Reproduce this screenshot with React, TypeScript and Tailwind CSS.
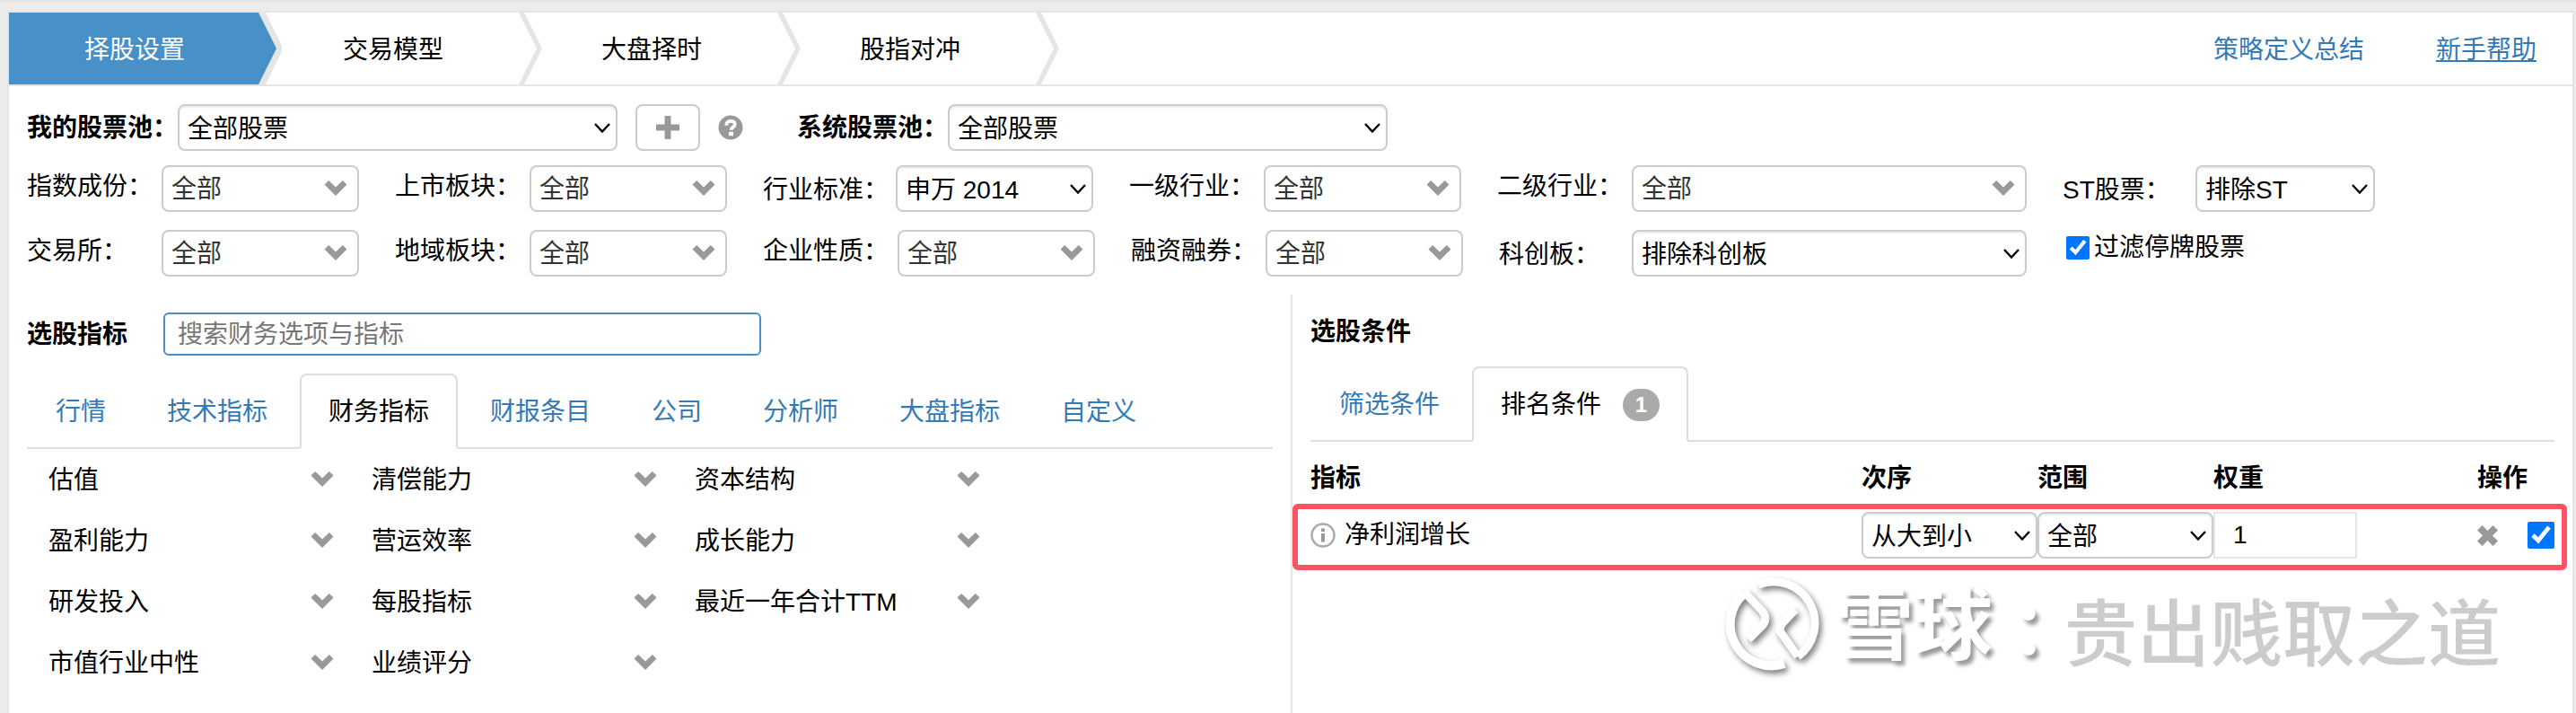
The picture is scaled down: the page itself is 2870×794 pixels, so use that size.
import React, { useState } from 'react';
import { clsx } from 'clsx';

type FieldProps = {
  id: string;
  label: string;
  value: string;
  kind: 'picker' | 'select';
  boxClass?: string;
};

const steps = ['择股设置', '交易模型', '大盘择时', '股指对冲'];

const filterRows: FieldProps[][] = [
  [
    { id: 'index', label: '指数成份：', value: '全部', kind: 'picker' },
    { id: 'board', label: '上市板块：', value: '全部', kind: 'picker' },
    { id: 'standard', label: '行业标准：', value: '申万 2014', kind: 'select' },
    { id: 'level1', label: '一级行业：', value: '全部', kind: 'picker' },
    { id: 'level2', label: '二级行业：', value: '全部', kind: 'picker', boxClass: 'w-[440px]' },
    { id: 'st', label: 'ST股票：', value: '排除ST', kind: 'select', boxClass: 'w-[200px]' },
  ],
  [
    { id: 'exchange', label: '交易所：', value: '全部', kind: 'picker' },
    { id: 'region', label: '地域板块：', value: '全部', kind: 'picker' },
    { id: 'nature', label: '企业性质：', value: '全部', kind: 'picker' },
    { id: 'margin', label: '融资融券：', value: '全部', kind: 'picker' },
    { id: 'star', label: '科创板：', value: '排除科创板', kind: 'select', boxClass: 'w-[440px]' },
  ],
];

const indicatorTabs = ['行情', '技术指标', '财务指标', '财报条目', '公司', '分析师', '大盘指标', '自定义'];

const indicatorGroups = [
  '估值', '清偿能力', '资本结构',
  '盈利能力', '营运效率', '成长能力',
  '研发投入', '每股指标', '最近一年合计TTM',
  '市值行业中性', '业绩评分',
];

function ThickChevron() {
  return (
    <svg className="mb-1 h-[17px] w-[26px] shrink-0 fill-[#999]" viewBox="0 0 26 17" aria-hidden="true">
      <path d="M.5 4.500 5.200 0 13 7.500 20.800 0l4.700 4.500L13 17z" />
    </svg>
  );
}

function Select({ id, value, label, className }: { id: string; value: string; label?: string; className?: string }) {
  return (
    <div className={clsx('relative', className)}>
      <select
        id={id}
        aria-label={label}
        className="block h-[52px] w-full appearance-none rounded-lg border-2 border-[#ccc] bg-white pl-[9px] pr-8 pt-1 text-black shadow-[inset_0_2px_2px_rgba(0,0,0,0.08)]"
      >
        <option>{value}</option>
      </select>
      <svg
        className="pointer-events-none absolute right-2 top-[21px] h-[11px] w-[18px]"
        viewBox="0 0 18 11"
        fill="none"
        stroke="#000"
        strokeWidth="2.4"
        aria-hidden="true"
      >
        <path d="m1 1 8 8.5L17 1" />
      </svg>
    </div>
  );
}

function Field({ id, label, value, kind, boxClass = 'w-[220px]' }: FieldProps) {
  if (kind === 'select') {
    return (
      <div className="flex">
        <label htmlFor={id} className="w-[148px] pt-2">{label}</label>
        <Select id={id} value={value} className={boxClass} />
      </div>
    );
  }
  return (
    <div className="flex">
      <label htmlFor={id} className="w-[150px] pt-1">{label}</label>
      <button
        id={id}
        type="button"
        className={clsx('flex h-[52px] items-center justify-between rounded-lg border-2 border-[#ccc] pl-[9px] pr-[11px] pt-0.5 text-[#333]', boxClass)}
      >
        {value}
        <ThickChevron />
      </button>
    </div>
  );
}

function Tab({ active, onClick, children }: { active: boolean; onClick: () => void; children: React.ReactNode }) {
  return (
    <button
      type="button"
      role="tab"
      aria-selected={active}
      onClick={onClick}
      className={clsx(
        '-mb-0.5 flex h-[84px] items-center rounded-t-lg border-2 px-[30px] pt-0.5',
        active ? 'border-[#ddd] border-b-white bg-white text-black' : 'border-transparent text-[#337ab7]'
      )}
    >
      {children}
    </button>
  );
}

function StepBar() {
  const [current, setCurrent] = useState(0);

  return (
    <header className="flex h-[82px] items-stretch justify-between border-b-2 border-[#e5e5e5]">
      <nav className="flex">
        {steps.map((step, index) => (
          <button
            key={step}
            type="button"
            onClick={() => setCurrent(index)}
            className={clsx('relative w-[288px] pr-2 pt-1', index === current ? 'text-white' : 'text-black')}
          >
            <svg className="absolute left-0 top-0 h-20 w-[306px]" viewBox="0 0 306 80" aria-hidden="true">
              {index === current ? (
                <>
                  <path d="M278 0h8l18 37v6l-18 37h-8z" fill="#e5e5e5" />
                  <path d="M0 0h278l20 40-20 40H0z" fill="#4890c8" />
                </>
              ) : (
                <path d="M280 0h6l20 40-20 40h-6l20-40z" fill="#e5e5e5" />
              )}
            </svg>
            <span className="relative">{step}</span>
          </button>
        ))}
      </nav>
      <div className="flex items-center gap-20 pr-10 pt-1 text-[#337ab7]">
        <a href="#summary">策略定义总结</a>
        <a href="#help" className="underline">新手帮助</a>
      </div>
    </header>
  );
}

function StockPools() {
  return (
    <div className="flex items-center">
      <label htmlFor="my-pool" className="w-[168px] pt-0.5 font-bold">我的股票池：</label>
      <Select id="my-pool" value="全部股票" className="w-[490px]" />
      <button type="button" aria-label="新建股票池" className="ml-5 flex h-[52px] w-[72px] items-center justify-center rounded-lg border-2 border-[#ccc]">
        <svg className="h-[26px] w-[26px] fill-[#999]" viewBox="0 0 26 26" aria-hidden="true">
          <path d="M10.500 0h5a1 1 0 0 1 1 1v8.500H25a1 1 0 0 1 1 1v5a1 1 0 0 1-1 1h-8.500V25a1 1 0 0 1-1 1h-5a1 1 0 0 1-1-1v-8.500H1a1 1 0 0 1-1-1v-5a1 1 0 0 1 1-1h8.500V1a1 1 0 0 1 1-1z" />
        </svg>
      </button>
      <svg className="ml-5 h-7 w-7" viewBox="0 0 28 28" aria-hidden="true">
        <circle cx="14" cy="14" r="13.5" fill="#999" />
        <path d="M9.300 11.800c0-3.400 2-5 4.900-5 2.800 0 4.600 1.500 4.600 3.800 0 3.200-4.300 2.800-4.300 6.200" fill="none" stroke="#fff" strokeWidth="3.800" />
        <rect x="12" y="18.800" width="5" height="4.400" fill="#fff" />
      </svg>
      <label htmlFor="system-pool" className="ml-[60px] w-[168px] pt-0.5 font-bold">系统股票池：</label>
      <Select id="system-pool" value="全部股票" className="w-[490px]" />
    </div>
  );
}

function IndicatorPanel() {
  const [tab, setTab] = useState('财务指标');

  return (
    <section className="w-1/2 pl-5 pr-5">
      <div className="flex items-center pt-5">
        <label htmlFor="search" className="w-[152px] pt-0.5 font-bold">选股指标</label>
        <input
          id="search"
          type="text"
          placeholder="搜索财务选项与指标"
          className="h-12 w-[666px] rounded-md border-2 border-[#4890c8] px-[14px] pt-0.5 placeholder:text-[#777]"
        />
      </div>
      <div role="tablist" className="mt-5 flex gap-1 border-b-2 border-[#ddd]">
        {indicatorTabs.map(name => (
          <Tab key={name} active={name === tab} onClick={() => setTab(name)}>{name}</Tab>
        ))}
      </div>
      <ul className="grid w-[1080px] grid-cols-3">
        {indicatorGroups.map(name => (
          <li key={name}>
            <button type="button" className="flex h-[68px] w-full items-center justify-between pl-6 pr-[18px] pt-0.5">
              {name}
              <ThickChevron />
            </button>
          </li>
        ))}
      </ul>
    </section>
  );
}

function ConditionTable() {
  return (
    <table className="w-full table-fixed text-left">
      <thead>
        <tr className="h-[69px]">
          <th className="pl-5 pt-3">指标</th>
          <th className="w-[196px] pt-3">次序</th>
          <th className="w-[196px] pt-3">范围</th>
          <th className="w-[294px] pt-3">权重</th>
          <th className="w-[100px] pt-3">操作</th>
        </tr>
      </thead>
      <tbody>
        <tr className="relative h-[74px]">
          <td className="pb-1 pl-5">
            <span className="pointer-events-none absolute inset-0 rounded-md border-[6px] border-[#ff5263]" />
            <div className="flex items-center gap-[10px]">
              <svg className="h-7 w-7" viewBox="0 0 28 28" aria-hidden="true">
                <circle cx="14" cy="14" r="12.500" fill="none" stroke="#aaa" strokeWidth="2.500" />
                <path d="M12 6.500h4v3.600h-4zM12 12h4v9.500h-4z" fill="#999" />
              </svg>
              净利润增长
            </div>
          </td>
          <td className="pb-1"><Select id="order" label="次序" value="从大到小" /></td>
          <td className="pb-1"><Select id="range" label="范围" value="全部" /></td>
          <td className="pb-1">
            <input type="text" aria-label="权重" defaultValue="1" className="block h-[52px] w-40 border-2 border-[#e5e5e5] px-5" />
          </td>
          <td className="pb-1">
            <div className="flex items-center justify-between pr-[14px]">
              <button type="button" aria-label="删除">
                <svg className="h-[23px] w-[23px] fill-[#999]" viewBox="0 0 23 23" aria-hidden="true">
                  <path d="M0 5.500 5.500 0l6 6 6-6L23 5.500l-6 6 6 6-5.500 5.500-6-6-6 6L0 17.500l6-6z" />
                </svg>
              </button>
              <input type="checkbox" aria-label="启用" defaultChecked className="h-[30px] w-[30px] accent-[#0075ff]" />
            </div>
          </td>
        </tr>
      </tbody>
    </table>
  );
}

function Watermark() {
  return (
    <div className="flex items-center whitespace-nowrap pl-[480px] leading-[104px]">
      <svg className="h-[108px] w-[108px] shrink-0 drop-shadow-[3px_4px_3px_rgba(0,0,0,0.5)]" viewBox="0 0 108 108" fill="none" stroke="#fff" strokeWidth="9" aria-hidden="true">
        <path d="M39 8a46 46 0 0 1 44 80" />
        <path d="M23 18a46 46 0 0 0 45 78" strokeWidth="10" />
        <path d="m23 16 20 21q7 8 1 16L28 69M80 36 66 51q-6 7 0 13l17 24" />
      </svg>
      <span className="ml-4 text-[88px] font-bold text-white [text-shadow:4px_5px_4px_rgba(0,0,0,0.4)]">雪球</span>
      {/* the TC face centres the colon in its square */}
      <span className="font-['Noto_Sans_CJK_TC',sans-serif] text-[80px] font-bold text-white [text-shadow:4px_5px_4px_rgba(0,0,0,0.4)]">：</span>
      <span className="pt-5 text-[81px] font-medium text-[#ccc]">贵出贱取之道</span>
    </div>
  );
}

function ConditionPanel() {
  const [tab, setTab] = useState('排名条件');

  return (
    <section className="w-1/2 border-l-2 border-[#e5e5e5]">
      <div className="pl-5 pr-5">
        <h2 className="pb-[18px] pt-[22px] font-bold">选股条件</h2>
        <div role="tablist" className="flex gap-1 border-b-2 border-[#ddd]">
          <Tab active={tab === '筛选条件'} onClick={() => setTab('筛选条件')}>筛选条件</Tab>
          <Tab active={tab === '排名条件'} onClick={() => setTab('排名条件')}>
            排名条件
            <span className="ml-6 flex h-9 w-[41px] items-center justify-center rounded-full bg-[#aaa] text-2xl font-bold text-white">1</span>
          </Tab>
        </div>
      </div>
      <div className="pr-[6px]">
        <ConditionTable />
      </div>
      <Watermark />
    </section>
  );
}

export default function App() {
  return (
    <div className="min-h-screen border-t-2 border-[#e5e5e5] bg-[#ececec] pl-2 pr-[2px] pt-[10px] font-['Liberation_Sans','Noto_Sans_CJK_SC',sans-serif] text-[28px] leading-10 text-black">
      <main className="flex min-h-[calc(100vh-12px)] flex-col border-2 border-b-0 border-[#e5e5e5] bg-white">
        <StepBar />
        <div className="px-5 py-5">
          <StockPools />
          <div className="mt-4 space-y-5">
            {filterRows.map((row, index) => (
              <div key={index} className="flex gap-10">
                {row.map(field => (
                  <Field key={field.id} {...field} />
                ))}
                {index === 1 && (
                  <label className="flex h-10 items-center gap-[5px] pl-1">
                    <input type="checkbox" defaultChecked className="h-[26px] w-[26px] accent-[#0075ff]" />
                    过滤停牌股票
                  </label>
                )}
              </div>
            ))}
          </div>
        </div>
        <div className="flex grow">
          <IndicatorPanel />
          <ConditionPanel />
        </div>
      </main>
    </div>
  );
}
